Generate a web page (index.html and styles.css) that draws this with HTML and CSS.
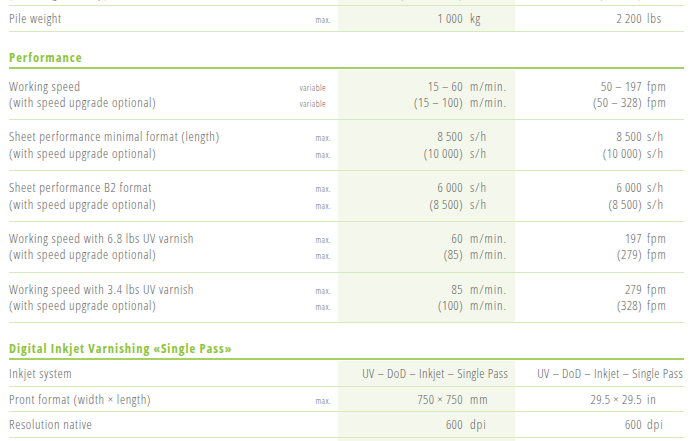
FILE: index.html
```html
<!DOCTYPE html>
<html lang="en">
<head>
<meta charset="utf-8">
<title>Specifications</title>
<link rel="stylesheet" href="styles.css">
</head>
<body>
<div class="sheet">
  <div class="row cut">
    <div class="label">(including non-stop)</div>
    <div class="qual"></div>
    <div class="n1">(500 – 1 200)</div>
    <div class="u1">mm</div>
    <div class="n2">(20 – 47)</div>
    <div class="u2">in</div>
  </div>
  <div class="row">
    <div class="label">Pile weight</div>
    <div class="qual">max.</div>
    <div class="n1">1 000</div>
    <div class="u1">kg</div>
    <div class="n2">2 200</div>
    <div class="u2">lbs</div>
  </div>

  <h2 class="heading">Performance</h2>
  <div class="row double">
    <div class="label">Working speed<br>(with speed upgrade optional)</div>
    <div class="qual var">variable<br>variable</div>
    <div class="n1">15 – 60<br>(15 – 100)</div>
    <div class="u1">m/min.<br>m/min.</div>
    <div class="n2">50 – 197<br>(50 – 328)</div>
    <div class="u2">fpm<br>fpm</div>
  </div>
  <div class="row double">
    <div class="label">Sheet performance minimal format (length)<br>(with speed upgrade optional)</div>
    <div class="qual">max.<br>max.</div>
    <div class="n1">8 500<br>(10 000)</div>
    <div class="u1">s/h<br>s/h</div>
    <div class="n2">8 500<br>(10 000)</div>
    <div class="u2">s/h<br>s/h</div>
  </div>
  <div class="row double">
    <div class="label">Sheet performance B2 format<br>(with speed upgrade optional)</div>
    <div class="qual">max.<br>max.</div>
    <div class="n1">6 000<br>(8 500)</div>
    <div class="u1">s/h<br>s/h</div>
    <div class="n2">6 000<br>(8 500)</div>
    <div class="u2">s/h<br>s/h</div>
  </div>
  <div class="row double">
    <div class="label">Working speed with 6.8 lbs UV varnish<br>(with speed upgrade optional)</div>
    <div class="qual">max.<br>max.</div>
    <div class="n1">60<br>(85)</div>
    <div class="u1">m/min.<br>m/min.</div>
    <div class="n2">197<br>(279)</div>
    <div class="u2">fpm<br>fpm</div>
  </div>
  <div class="row double">
    <div class="label">Working speed with 3.4 lbs UV varnish<br>(with speed upgrade optional)</div>
    <div class="qual">max.<br>max.</div>
    <div class="n1">85<br>(100)</div>
    <div class="u1">m/min.<br>m/min.</div>
    <div class="n2">279<br>(328)</div>
    <div class="u2">fpm<br>fpm</div>
  </div>

  <h2 class="heading">Digital Inkjet Varnishing «Single Pass»</h2>
  <div class="row">
    <div class="label">Inkjet system</div>
    <div class="qual"></div>
    <div class="s1">UV – DoD – Inkjet – Single Pass</div>
    <div class="s2">UV – DoD – Inkjet – Single Pass</div>
  </div>
  <div class="row">
    <div class="label">Pront format (width × length)</div>
    <div class="qual">max.</div>
    <div class="n1">750 × 750</div>
    <div class="u1">mm</div>
    <div class="n2">29.5 × 29.5</div>
    <div class="u2">in</div>
  </div>
  <div class="row">
    <div class="label">Resolution native</div>
    <div class="qual"></div>
    <div class="n1">600</div>
    <div class="u1">dpi</div>
    <div class="n2">600</div>
    <div class="u2">dpi</div>
  </div>
  <div class="row">
    <div class="label">Drop size</div>
    <div class="qual"></div>
    <div class="n1">42</div>
    <div class="u1">pl</div>
    <div class="n2">42</div>
    <div class="u2">pl</div>
  </div>
</div>
</body>
</html>
```
FILE: styles.css
```css
html, body {
  margin: 0;
  padding: 0;
  background: #ffffff;
  overflow: hidden;
}

body {
  font-family: "Open Sans", "Liberation Sans", sans-serif;
  font-stretch: 75%;
  font-weight: 300;
  font-size: 13px;
  letter-spacing: 0.4px;
  color: #5f5f5f;
}

.sheet {
  width: 675px;
  margin: -15.5px 0 0 9px;
}

.row {
  display: grid;
  grid-template-columns: 1fr auto 125px 52px 127px 42px;
  border-bottom: 1px solid #d7e8bd;
  line-height: 16.5px;
}

.row > div {
  padding-top: 4px;
  padding-bottom: 4px;
}

.row.double > div {
  padding-top: 8px;
  padding-bottom: 8.75px;
}

.row.cut > div {
  padding-top: 0;
  padding-bottom: 4px;
}

.label {
  white-space: nowrap;
  letter-spacing: 0.65px;
}

.qual {
  font-size: 9px;
  letter-spacing: 0.4px;
  text-align: right;
  padding-right: 7px;
}

.row > .qual {
  padding-top: 6px;
  padding-bottom: 2px;
}

.row.double > .qual {
  padding-top: 10px;
  padding-bottom: 6.75px;
}

.qual.var {
  padding-right: 12px;
}

.n1, .u1, .s1 {
  background: #f4f8ec;
}

.n1, .n2 {
  text-align: right;
  white-space: nowrap;
}

.u1, .u2 {
  letter-spacing: 0.9px;
}

.u1 {
  padding-left: 7px;
}

.u2 {
  padding-left: 5px;
}

.s1 {
  grid-column: span 2;
  text-align: right;
  padding-right: 7px;
  white-space: nowrap;
}

.s2 {
  grid-column: span 2;
  text-align: right;
  padding-right: 1px;
  white-space: nowrap;
}

.heading {
  margin: 18px 0 1px;
  padding: 0 0 1px;
  font-size: 12.5px;
  line-height: 16px;
  font-weight: 700;
  letter-spacing: 1px;
  color: #8cc43e;
  border-bottom: 2px solid #a5d064;
}
```
